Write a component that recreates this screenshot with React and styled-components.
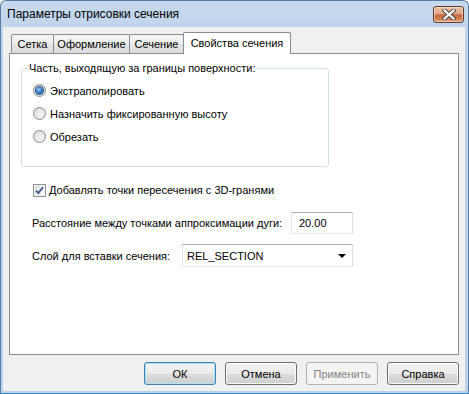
import React from "react";
import styled, { createGlobalStyle, css } from "styled-components";

const GlobalStyle = createGlobalStyle`
  html, body { margin: 0; padding: 0; background: #ffffff; }
  body {
    font-family: "Liberation Sans", Arial, sans-serif;
    font-size: 11px;
    color: #000;
  }
  * { box-sizing: border-box; }
`;

const Window = styled.div`
  width: 469px;
  height: 394px;
  display: flex;
  flex-direction: column;
  background: linear-gradient(#c6d9ee, #b9d1ea 60px, #b9d1ea);
  border: 1px solid #5b7da6;
  border-bottom-color: #2f8fd6;
  border-radius: 6px 6px 0 0;
  white-space: nowrap;
`;

const TitleBar = styled.div`
  height: 26px;
  display: flex;
  align-items: center;
  justify-content: space-between;
  padding: 0 4px 0 6px;
`;

const Title = styled.span`
  font-size: 12px;
  color: #000;
`;

const CloseButton = styled.div`
  width: 31px;
  height: 17px;
  border: 1px solid #5d3a34;
  border-radius: 3px;
  display: flex;
  align-items: center;
  justify-content: center;
  background: linear-gradient(#ebc4ab 0%, #dfa586 45%, #c7683d 52%, #cf7a4b 75%, #e2a47b 100%);
  box-shadow: inset 0 0 0 1px rgba(255, 230, 210, 0.6);
`;

const Client = styled.div`
  flex: 1;
  margin: 0 3px 2px 2px;
  background: #f0f0f0;
  display: flex;
  flex-direction: column;
  padding: 5px 6px 0 6px;
`;

const TabStrip = styled.div`
  display: flex;
  align-items: flex-end;
  height: 21px;
  padding-left: 2px;
  position: relative;
  z-index: 1;
`;

const Tab = styled.div`
  width: ${(p) => p.$w}px;
  height: 19px;
  margin-left: -1px;
  &:first-child { margin-left: 0; }
  display: flex;
  align-items: center;
  justify-content: center;
  border: 1px solid #898c95;
  border-bottom: none;
  border-radius: 2px 2px 0 0;
  background: linear-gradient(#f4f4f4, #eeeeee 50%, #e4e4e4 51%, #dcdcdc);
  ${(p) =>
    p.$active &&
    css`
      height: 22px;
      margin-bottom: -1px;
      background: #ffffff;
      padding-bottom: 2px;
    `}
`;

const Panel = styled.div`
  height: 302px;
  border: 1px solid #898c95;
  background: #ffffff;
  padding: 14px 0 0 11px;
  display: flex;
  flex-direction: column;
`;

const GroupBox = styled.div`
  position: relative;
  width: 308px;
  height: 99px;
  border: 1px solid #d5dfe5;
  border-radius: 3px;
  padding: 10px 0 0 11px;
`;

const GroupTitle = styled.span`
  position: absolute;
  top: -8px;
  left: 6px;
  padding: 0 1px;
  line-height: 14px;
  background: #ffffff;
`;

const OptionRow = styled.label`
  height: 23px;
  display: flex;
  align-items: center;
  gap: 4px;
`;

const Radio = styled.span`
  width: 13px;
  height: 13px;
  border-radius: 50%;
  border: 1px solid #8a8c8e;
  background: radial-gradient(circle at 60% 65%, #f6f6f6 0%, #e2e2e2 60%, #cfcfcf 100%);
  display: flex;
  align-items: center;
  justify-content: center;
  flex: none;
  ${(p) =>
    p.$checked &&
    css`
      &::after {
        content: "";
        width: 7px;
        height: 7px;
        border-radius: 50%;
        background: radial-gradient(circle at 40% 35%, #9fd3ff 0%, #3a7fd0 45%, #17437a 100%);
        box-shadow: 0 0 0 1px #1f4d86;
      }
    `}
`;

const Section = styled.div`
  margin-left: 11px;
  display: flex;
  flex-direction: column;
`;

const CheckRow = styled.label`
  margin-top: 15px;
  height: 16px;
  padding-left: 1px;
  display: flex;
  align-items: center;
  gap: 3px;
`;

const CheckBox = styled.span`
  width: 13px;
  height: 13px;
  border: 1px solid #8e8f8f;
  background: linear-gradient(135deg, #dcdcdc, #fbfbfb);
  box-shadow: inset 0 0 0 1px #f4f4f4;
  flex: none;
  display: flex;
`;

const FieldRow = styled.div`
  margin-top: ${(p) => p.$mt}px;
  width: 321px;
  display: flex;
  align-items: center;
  justify-content: space-between;
`;

const TextBox = styled.div`
  width: 62px;
  height: 22px;
  border: 1px solid #abadb3;
  border-left-color: #e2e3ea;
  border-right-color: #dbdfe6;
  border-bottom-color: #e3e9ef;
  background: #ffffff;
  padding-left: 7px;
  display: flex;
  align-items: center;
`;

const ComboBox = styled.div`
  width: 171px;
  height: 23px;
  border: 1px solid #abadb3;
  border-left-color: #e2e3ea;
  border-right-color: #dbdfe6;
  border-bottom-color: #e3e9ef;
  background: #ffffff;
  padding: 0 6px 0 4px;
  display: flex;
  align-items: center;
  justify-content: space-between;
`;

const Arrow = styled.span`
  width: 0;
  height: 0;
  border-left: 4px solid transparent;
  border-right: 4px solid transparent;
  border-top: 4px solid #000;
  margin-top: 1px;
`;

const ButtonBar = styled.div`
  margin-top: 7px;
  display: flex;
  justify-content: flex-end;
  gap: 9px;
`;

const Button = styled.div`
  width: 72px;
  height: 23px;
  border: 1px solid #707070;
  border-radius: 3px;
  display: flex;
  align-items: center;
  justify-content: center;
  background: linear-gradient(#f2f2f2 0%, #ebebeb 50%, #dddddd 51%, #cfcfcf 100%);
  box-shadow: inset 0 0 0 1px #fbfbfb;
  ${(p) =>
    p.$default &&
    css`
      border-color: #3c7fb1;
      box-shadow: inset 0 0 0 1px #a9e3fa;
    `}
  ${(p) =>
    p.$disabled &&
    css`
      border-color: #adb2b5;
      background: #f4f4f4;
      box-shadow: none;
      color: #838383;
    `}
`;

const tabs = [
  { label: "Сетка", w: 43 },
  { label: "Оформление", w: 77 },
  { label: "Сечение", w: 55 },
  { label: "Свойства сечения", w: 108, active: true },
];

const options = [
  { label: "Экстраполировать", checked: true },
  { label: "Назначить фиксированную высоту" },
  { label: "Обрезать" },
];

export default function App() {
  return (
    <>
      <GlobalStyle />
      <Window>
        <TitleBar>
          <Title>Параметры отрисовки сечения</Title>
          <CloseButton>
            <svg width="14" height="11" viewBox="0 0 14 11">
              <path d="M2.5 1.5 L11.5 9.5 M11.5 1.5 L2.5 9.5" stroke="#4a4a4a" strokeWidth="4.2" strokeLinecap="square" />
              <path d="M2.5 1.5 L11.5 9.5 M11.5 1.5 L2.5 9.5" stroke="#ffffff" strokeWidth="2.2" strokeLinecap="square" />
            </svg>
          </CloseButton>
        </TitleBar>
        <Client>
          <TabStrip>
            {tabs.map((t) => (
              <Tab key={t.label} $w={t.w} $active={t.active}>
                {t.label}
              </Tab>
            ))}
          </TabStrip>
          <Panel>
            <GroupBox>
              <GroupTitle>Часть, выходящую за границы поверхности:</GroupTitle>
              {options.map((o) => (
                <OptionRow key={o.label}>
                  <Radio $checked={o.checked} />
                  {o.label}
                </OptionRow>
              ))}
            </GroupBox>
            <Section>
              <CheckRow>
                <CheckBox>
                  <svg width="11" height="11" viewBox="0 0 11 11">
                    <path d="M2 5.5 L4.3 8 L9 2.2" fill="none" stroke="#3c5a8e" strokeWidth="1.8" />
                  </svg>
                </CheckBox>
                Добавлять точки пересечения с 3D-гранями
              </CheckRow>
              <FieldRow $mt={14}>
                <span>Расстояние между точками аппроксимации дуги:</span>
                <TextBox>20.00</TextBox>
              </FieldRow>
              <FieldRow $mt={10}>
                <span>Слой для вставки сечения:</span>
                <ComboBox>
                  REL_SECTION
                  <Arrow />
                </ComboBox>
              </FieldRow>
            </Section>
          </Panel>
          <ButtonBar>
            <Button $default>ОК</Button>
            <Button>Отмена</Button>
            <Button $disabled>Применить</Button>
            <Button>Справка</Button>
          </ButtonBar>
        </Client>
      </Window>
    </>
  );
}
